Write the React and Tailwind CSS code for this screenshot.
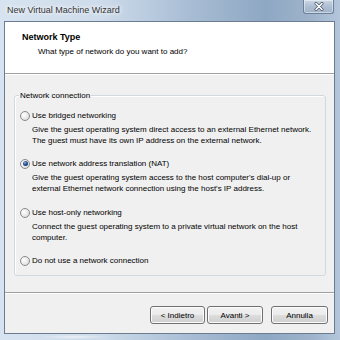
import React from "react";

function Radio({ checked }) {
  return (
    <span className="relative flex h-[10px] w-[10px] shrink-0 items-center justify-center rounded-full border border-[#8a8a8a] bg-[radial-gradient(circle_at_35%_35%,#ffffff_0%,#e6e6e6_60%,#cfcfcf_100%)]">
      {checked && (
        <span className="h-[5px] w-[5px] rounded-full bg-[radial-gradient(circle_at_40%_35%,#8fb6e6_0%,#1f4f8f_45%,#0b1f45_100%)]" />
      )}
    </span>
  );
}

function Option({ checked, title, className, children }) {
  return (
    <div className={className}>
      <div className="flex h-[11px] items-center gap-[2px]">
        <Radio checked={checked} />
        <span className="leading-[11px] whitespace-nowrap">{title}</span>
      </div>
      {children && (
        <div className="mt-[3px] pl-[12px] leading-[11px] whitespace-nowrap">{children}</div>
      )}
    </div>
  );
}

function Btn({ w, children }) {
  return (
    <div
      className={`${w} flex h-[18px] items-center justify-center rounded-[3px] border border-[#707070] bg-[linear-gradient(180deg,#f2f2f2_0%,#ebebeb_50%,#dddddd_51%,#cfcfcf_100%)] shadow-[inset_0_0_0_1px_#fcfcfc] text-[8px] leading-[11px]`}
    >
      {children}
    </div>
  );
}

export default function App() {
  return (
    <div
      className="flex h-[340px] w-[340px] flex-col overflow-hidden bg-[linear-gradient(90deg,#d7e3f0_0%,#cddbea_30%,#a9bed5_55%,#8ea7c3_78%,#9fb4cc_92%,#b3c6db_100%)] text-black"
      style={{ fontFamily: '"Liberation Sans", Arial, sans-serif' }}
    >
      {/* title bar */}
      <div className="flex h-[21px] shrink-0 items-start justify-between">
        <div className="pl-[7px] pt-[5px] text-[9px] leading-[11px] text-[#333] [text-shadow:0_0_4px_#fff,0_0_6px_#fff]">
          New Virtual Machine Wizard
        </div>
        <div className="mr-[6px] flex h-[14px] w-[31px] items-center justify-center rounded-b-[3px] border border-t-0 border-[#6d809a] bg-[linear-gradient(180deg,#c9d6e4_0%,#aebfd3_50%,#9fb3ca_100%)] shadow-[inset_0_0_0_1px_rgba(255,255,255,0.45)]">
          <svg width="10" height="9" viewBox="0 0 10 9">
            <path d="M2 1.5 L8 7.5 M8 1.5 L2 7.5" stroke="#4a5566" strokeWidth="3" strokeLinecap="round" />
            <path d="M2 1.5 L8 7.5 M8 1.5 L2 7.5" stroke="#ffffff" strokeWidth="1.6" strokeLinecap="round" />
          </svg>
        </div>
      </div>

      {/* client area */}
      <div className="ml-[4px] flex h-[313px] w-[331px] shrink-0 flex-col border border-[#6b7c91] bg-[#f0f0f0]">
        {/* header */}
        <div className="h-[52px] shrink-0 border-b border-[#a0a0a0] bg-white pl-[17px] pt-[10px]">
          <div className="text-[9px] font-bold leading-[11px]">Network Type</div>
          <div className="mt-[3px] pl-[16px] text-[8px] leading-[11px]">What type of network do you want to add?</div>
        </div>
        <div className="flex flex-1 flex-col border-t border-white text-[8px]">
          {/* group box */}
          <div className="relative ml-[9px] mt-[20px] h-[181px] w-[312px] rounded-[3px] border border-[#d0d9e0] pl-[5px] pt-[14px] shadow-[inset_1px_1px_0_#ffffff]">
            <span className="absolute left-[4px] top-[-6px] bg-[#f0f0f0] px-[1px] leading-[11px]">Network connection</span>
            <Option title="Use bridged networking">
              Give the guest operating system direct access to an external Ethernet network.
              <br />
              The guest must have its own IP address on the external network.
            </Option>
            <Option className="mt-[12px]" checked title="Use network address translation (NAT)">
              Give the guest operating system access to the host computer's dial-up or
              <br />
              external Ethernet network connection using the host's IP address.
            </Option>
            <Option className="mt-[13px]" title="Use host-only networking">
              Connect the guest operating system to a private virtual network on the host
              <br />
              computer.
            </Option>
            <Option className="mt-[12px]" title="Do not use a network connection" />
          </div>
          {/* separator */}
          <div className="mt-[16px] border-t border-b border-t-[#a0a0a0] border-b-white" />
          {/* buttons */}
          <div className="mt-[12px] flex justify-end pr-[6px]">
            <Btn w="w-[55px]">&lt; Indietro</Btn>
            <div className="w-[2px]" />
            <Btn w="w-[56px]">Avanti &gt;</Btn>
            <div className="w-[8px]" />
            <Btn w="w-[57px]">Annulla</Btn>
          </div>
        </div>
      </div>
      {/* bottom frame glow */}
      <div className="ml-[40px] mt-[1px] h-[4px] w-[70px] rounded-full bg-[radial-gradient(ellipse_at_center,rgba(255,255,255,0.6)_0%,rgba(255,255,255,0)_70%)]" />
    </div>
  );
}
